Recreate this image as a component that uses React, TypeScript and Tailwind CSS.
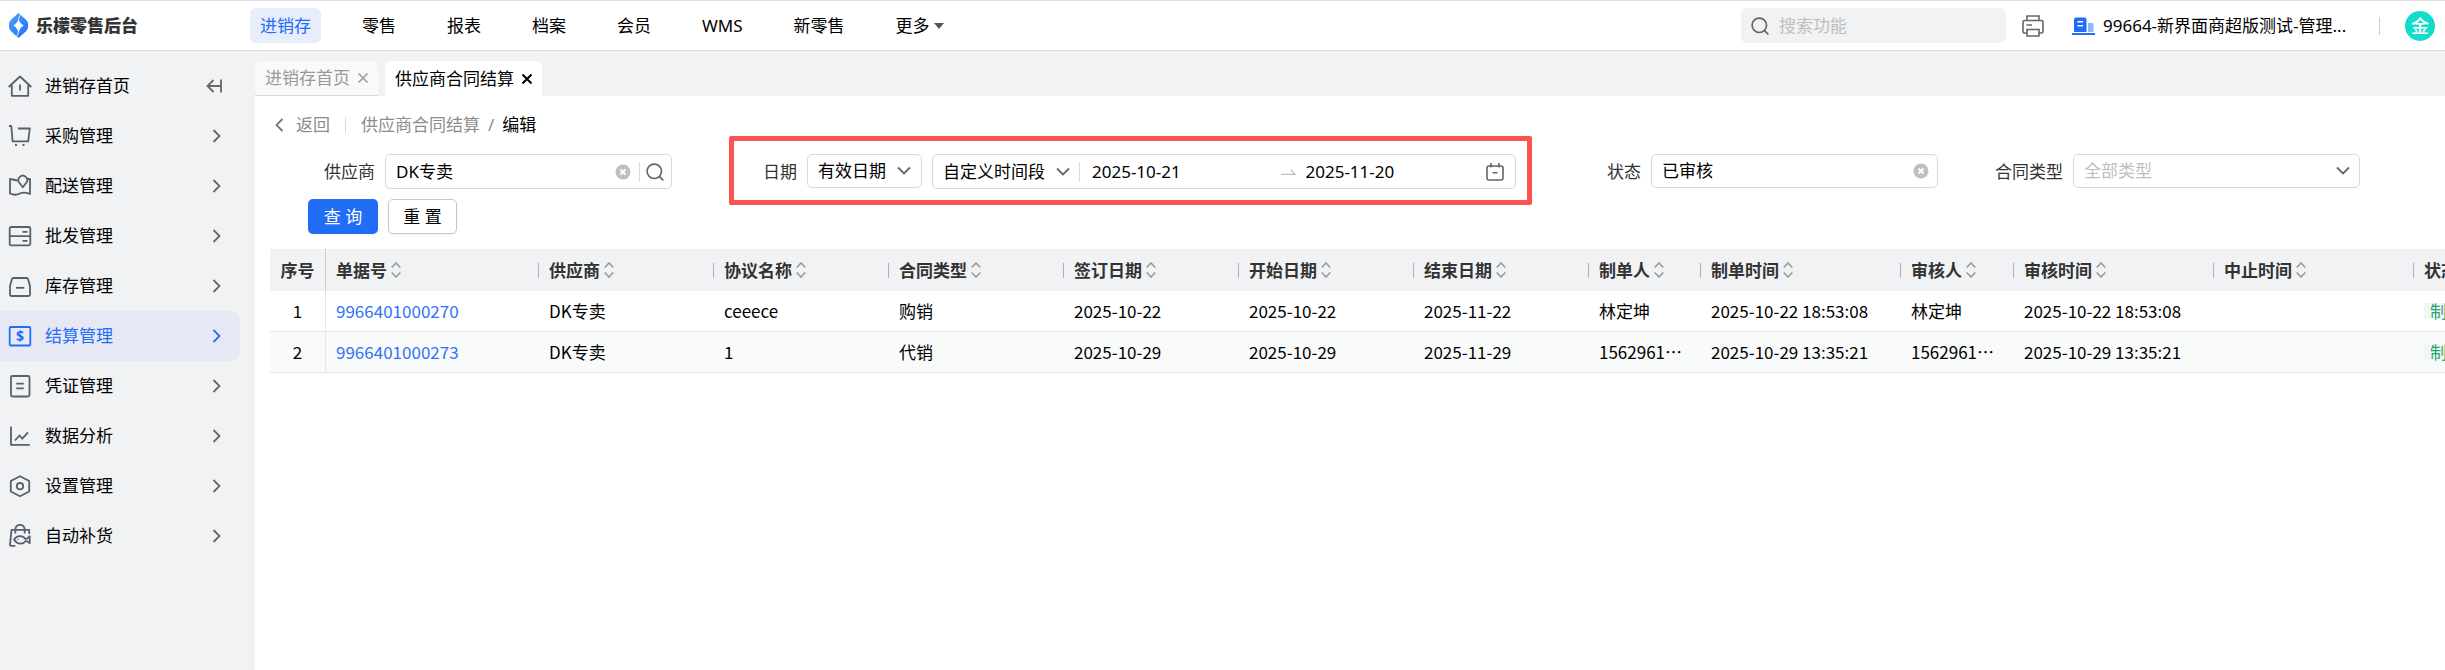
import { useState, type ReactNode } from 'react'
import clsx from 'clsx'

const navItems = ['进销存', '零售', '报表', '档案', '会员', 'WMS', '新零售']

const menuItems: { label: string; icon: ReactNode }[] = [
  {
    label: '进销存首页',
    icon: (
      <>
        <path d="M.7 13 12 2.500 23.300 13" />
        <path d="M3.800 11v10.800h16.400V11M12 10.500v6" />
      </>
    ),
  },
  {
    label: '采购管理',
    icon: (
      <>
        <path d="M1 2h2.300l1.300 15.300h15.600L21.800 4.500H10" />
        <path d="M7 21h2M14.500 21h2" />
      </>
    ),
  },
  {
    label: '配送管理',
    icon: (
      <>
        <path d="M9.500 6.500 2 5v14.500c4 2 7 1.500 10 0 3.500-1.700 6-1 10 .5V5h-2.500" />
        <path d="M14.800 13.300 11.300 8.800a4.400 4.400 0 1 1 7 0z" />
      </>
    ),
  },
  {
    label: '批发管理',
    icon: (
      <>
        <rect x="1.700" y="3" width="20.600" height="18.300" rx="1.500" />
        <path d="M1.700 12.200h20.600M14.500 7.800h5M14.500 16.800h5" />
      </>
    ),
  },
  {
    label: '库存管理',
    icon: (
      <>
        <path d="M5.500 4h13a1.500 1.500 0 0 1 1.500 1l2 7v8.500a1.500 1.500 0 0 1-1.500 1.500h-17A1.500 1.500 0 0 1 2 20.500V12l2-7a1.500 1.500 0 0 1 1.500-1z" />
        <path d="M8 13.800h8.300" />
      </>
    ),
  },
  {
    label: '结算管理',
    icon: (
      <>
        <rect x="1.700" y="3" width="20.600" height="18.500" rx="1" />
        <text x="12" y="17" fontSize="14" fontWeight="700" textAnchor="middle" fill="currentColor" stroke="none">
          $
        </text>
      </>
    ),
  },
  {
    label: '凭证管理',
    icon: (
      <>
        <rect x="3" y="2" width="18.500" height="20.500" rx="1.500" />
        <path d="M8.300 9.700h7.500M8.300 14.300h7.500" />
      </>
    ),
  },
  {
    label: '数据分析',
    icon: (
      <>
        <path d="M3 2.500v18.300h18.800" />
        <path d="m7 16.500 4.500-5 2.800 3.200 5.700-6.400" />
      </>
    ),
  },
  {
    label: '设置管理',
    icon: (
      <>
        <path d="M12 2.200 21.200 7v10.500L12 22.200 2.800 17.500V7z" />
        <circle cx="12" cy="12.200" r="3.200" />
      </>
    ),
  },
  {
    label: '自动补货',
    icon: (
      <>
        <path d="M7.300 9.500V5.500a4.700 4.700 0 0 1 9.400 0v4" />
        <path d="M21.200 10V5.800H3.500L2 20.700a1 1 0 0 0 1 1.100h4.300" />
        <path d="M6 15.500c3-4.500 9-4.500 11.500-.5 1.300.5 2.500-1 4.200-2.800v7c-1.700-1.500-2.900-2.500-4.200-2-2.500 3.500-8.500 3.500-11.500-1.700z" />
        <path d="M10 15v.8" />
      </>
    ),
  },
]

const columns = [
  { title: '单据号', width: 'w-[213px]' },
  { title: '供应商', width: 'w-[175px]' },
  { title: '协议名称', width: 'w-[175px]' },
  { title: '合同类型', width: 'w-[175px]' },
  { title: '签订日期', width: 'w-[175px]' },
  { title: '开始日期', width: 'w-[175px]' },
  { title: '结束日期', width: 'w-[175px]' },
  { title: '制单人', width: 'w-[112px]' },
  { title: '制单时间', width: 'w-[200px]' },
  { title: '审核人', width: 'w-[113px]' },
  { title: '审核时间', width: 'w-[200px]' },
  { title: '中止时间', width: 'w-[200px]' },
  { title: '状态', width: 'w-[175px]' },
]

const rows = [
  ['9966401000270', 'DK专卖', 'ceeece', '购销', '2025-10-22', '2025-10-22', '2025-11-22', '林定坤', '2025-10-22 18:53:08', '林定坤', '2025-10-22 18:53:08', '', '制单'],
  ['9966401000273', 'DK专卖', '1', '代销', '2025-10-29', '2025-10-29', '2025-11-29', '1562961⋯', '2025-10-29 13:35:21', '1562961⋯', '2025-10-29 13:35:21', '', '制单'],
]

type IconProps = { className?: string }

function ChevronRight({ className }: IconProps) {
  return (
    <svg viewBox="0 0 10 14" className={clsx('w-2.5 h-3.5 shrink-0', className)} fill="none" stroke="currentColor" strokeWidth="1.800">
      <path d="m1.500 1 6 6-6 6" />
    </svg>
  )
}

function ChevronDown({ className }: IconProps) {
  return (
    <svg viewBox="0 0 14 10" className={clsx('w-3.5 h-2.5 shrink-0 text-[#666]', className)} fill="none" stroke="currentColor" strokeWidth="1.800">
      <path d="m1 1.500 6 6 6-6" />
    </svg>
  )
}

function SearchIcon({ className }: IconProps) {
  return (
    <svg viewBox="0 0 18 18" className={clsx('size-[18px] shrink-0 text-[#666]', className)} fill="none" stroke="currentColor" strokeWidth="1.700">
      <circle cx="8.300" cy="8.300" r="7.200" />
      <path d="m13.300 13.300 4 4" />
    </svg>
  )
}

function ClearIcon() {
  return (
    <svg viewBox="0 0 16 16" className="size-4" fill="none">
      <circle cx="8" cy="8" r="7.500" fill="#bfbfbf" />
      <path d="m5.500 5.500 5 5m0-5-5 5" stroke="#fff" strokeWidth="1.900" />
    </svg>
  )
}

function CloseIcon({ className }: IconProps) {
  return (
    <svg viewBox="0 0 10 10" className={clsx('size-2.5', className)} fill="none" stroke="currentColor">
      <path d="m.5.5 9 9m0-9-9 9" />
    </svg>
  )
}

function SortIcon() {
  return (
    <svg viewBox="0 0 10 16" className="w-2.5 h-4 text-[#999]" fill="none" stroke="currentColor" strokeWidth="1.600">
      <path d="m.7 5.500 4.300-4.500 4.300 4.500M.7 10.500 5 15l4.300-4.500" />
    </svg>
  )
}

function Header() {
  return (
    <header className="flex h-[51px] items-center border-t border-b border-t-[#e0e0e0] border-b-[#d6d6d6] bg-white pl-[9px] pr-2.5">
      <div className="flex w-[241px] shrink-0 items-center gap-2">
        <svg viewBox="0 0 19 25" className="w-[19px] h-[25px]">
          <defs>
            <linearGradient id="logo" x1="0" y1="0" x2="1" y2="1">
              <stop offset="0" stopColor="#4aa6ff" />
              <stop offset="1" stopColor="#1f6cf9" />
            </linearGradient>
          </defs>
          <path
            fill="url(#logo)"
            fillRule="evenodd"
            d="M9.500 0 17 6.800q2 1.900 2 4.200v3q0 2.300-2 4.200L9.500 25 2 18.200q-2-1.900-2-4.200v-3q0-2.300 2-4.200zM9.500 5.500Q8.500 10.500 4.300 12.500 8.500 14.500 9.500 20q1-5.500 5.200-7.500Q10.500 10.500 9.500 5.500z"
          />
          <path stroke="#fff" strokeWidth=".8" d="m9.500 6 1.800-4.500M9.500 19l-1.800 4.500" />
        </svg>
        <span className="font-black text-[#333]">乐檬零售后台</span>
      </div>
      <nav className="flex items-center gap-[31px]">
        {navItems.map((item, i) => (
          <a
            key={item}
            href="#"
            className={clsx('flex h-[35px] items-center rounded-md px-2.5', i === 0 && 'bg-[#e8edfb] text-[#226df5]')}
          >
            {item}
          </a>
        ))}
        <button type="button" className="flex h-[35px] items-center gap-1 px-2.5">
          更多
          <svg viewBox="0 0 10 6" className="w-2.5 h-1.5" fill="#555">
            <path d="M0 0h10L5 6z" />
          </svg>
        </button>
      </nav>
      <div className="ml-auto flex items-center">
        <div className="flex h-[35px] w-[265px] items-center gap-2.5 rounded-md bg-[#f0f2f4] px-2.5">
          <SearchIcon />
          <input
            type="text"
            aria-label="搜索功能"
            placeholder="搜索功能"
            className="min-w-0 flex-1 bg-transparent outline-none placeholder:text-[#bfbfbf]"
          />
        </div>
        <button type="button" aria-label="打印" className="ml-4">
          <svg viewBox="0 0 22 22" className="size-[22px] text-[#666]" fill="none" stroke="currentColor" strokeWidth="1.600">
            <path d="M5 5.500V1h12v4.500M5 18H2.500A1.500 1.500 0 0 1 1 16.500V7a1.500 1.500 0 0 1 1.500-1.500h17A1.500 1.500 0 0 1 21 7v9.500a1.500 1.500 0 0 1-1.500 1.500H17" />
            <path d="M5 14.500h12V21H5zM4.500 10h5.500" />
          </svg>
        </button>
        <button type="button" className="ml-7 flex items-center gap-2">
          <svg viewBox="0 0 23 18" className="w-[23px] h-[18px]">
            <path fill="#226df5" d="M2 15V2.500A2 2 0 0 1 4 .5h8.500a2 2 0 0 1 2 2V15z" />
            <path fill="#8eb5fb" d="M16 6h4.500a1 1 0 0 1 1 1v8H16z" />
            <path fill="#226df5" d="M0 16h23v2H0z" />
            <path stroke="#fff" strokeWidth="1.600" d="M5.500 4.800H11M5.500 8.800H11" />
          </svg>
          <span className="w-[252px] truncate text-left">99664-新界面商超版测试-管理...</span>
        </button>
        <span className="ml-6 h-[18px] w-px bg-[#ccc]" />
        <span className="ml-[25px] flex size-[30px] items-center justify-center rounded-full bg-[#12dccb] text-[18px] font-medium text-white">金</span>
      </div>
    </header>
  )
}

function Sidebar() {
  return (
    <aside className="w-[255px] shrink-0 bg-[#f1f2f4] pt-2.5">
      <ul>
        {menuItems.map((item, i) => {
          const active = item.label === '结算管理'
          return (
            <li key={item.label}>
              <a
                href="#"
                className={clsx('mr-[15px] flex h-[50px] items-center rounded-r-[10px] pl-2 pr-[18px]', active && 'bg-[#e6e9f4] text-[#226df5]')}
              >
                <svg
                  viewBox="0 0 24 24"
                  className={clsx('size-6', active ? 'text-[#226df5]' : 'text-[#5a5f6e]')}
                  fill="none"
                  stroke="currentColor"
                  strokeWidth="1.800"
                  strokeLinejoin="round"
                >
                  {item.icon}
                </svg>
                <span className="ml-[13px] flex-1">{item.label}</span>
                {i === 0 ? (
                  <svg viewBox="0 0 16 14" className="w-4 h-3.5 text-[#666]" fill="none" stroke="currentColor" strokeWidth="1.800">
                    <path d="M15 .5v13M15 7H1.500M7.500 1l-6 6 6 6" />
                  </svg>
                ) : (
                  <ChevronRight className={active ? 'text-[#226df5]' : 'text-[#666]'} />
                )}
              </a>
            </li>
          )
        })}
      </ul>
    </aside>
  )
}

function Field({ label, htmlFor, wide, children }: { label: string; htmlFor: string; wide?: boolean; children: ReactNode }) {
  return (
    <div className={clsx('relative flex gap-2.5 pr-5', wide && 'col-span-2')}>
      <label htmlFor={htmlFor} className="flex h-[35px] w-[105px] shrink-0 items-center justify-end text-[#333]">
        {label}
      </label>
      {children}
    </div>
  )
}

function Filters() {
  const [supplier, setSupplier] = useState('DK专卖')
  const [start, setStart] = useState('2025-10-21')
  const [end, setEnd] = useState('2025-11-20')
  const [status, setStatus] = useState('已审核')

  return (
    <form onSubmit={(e) => e.preventDefault()}>
      <div className="grid grid-cols-5 pr-[65px]">
        <Field label="供应商" htmlFor="supplier">
          <div className="flex h-[35px] min-w-0 flex-1 items-center rounded-[5px] border border-[#d9d9d9] pl-2.5 pr-[7px]">
            <input id="supplier" value={supplier} onChange={(e) => setSupplier(e.target.value)} className="min-w-0 flex-1 outline-none" />
            <button type="button" aria-label="清除" onClick={() => setSupplier('')}>
              <ClearIcon />
            </button>
            <span className="ml-2 mr-1.5 h-5 w-px bg-[#d9d9d9]" />
            <button type="button" aria-label="选择供应商">
              <SearchIcon />
            </button>
          </div>
        </Field>

        <Field label="日期" htmlFor="date-type" wide>
          <div className="relative h-[34px] w-[115px] shrink-0">
            <select id="date-type" className="size-full appearance-none rounded-[5px] border border-[#d9d9d9] bg-white pl-2.5 outline-none">
              <option>有效日期</option>
            </select>
            <ChevronDown className="pointer-events-none absolute right-[11px] top-3" />
          </div>
          <div className="flex h-[35px] min-w-0 flex-1 items-center rounded-[5px] border border-[#d9d9d9] pl-2.5 pr-[11px]">
            <div className="relative flex w-[127px] shrink-0 items-center">
              <select aria-label="时间段" className="w-full appearance-none bg-white outline-none">
                <option>自定义时间段</option>
              </select>
              <ChevronDown className="pointer-events-none absolute right-0" />
            </div>
            <span className="ml-[9px] h-5 w-px bg-[#d9d9d9]" />
            <input aria-label="开始日期" value={start} onChange={(e) => setStart(e.target.value)} className="ml-3 min-w-0 flex-1 outline-none" />
            <svg viewBox="0 0 15 6" className="mr-2.5 ml-2 h-1.5 w-[15px] shrink-0" fill="none" stroke="#bfbfbf" strokeWidth="1.300">
              <path d="M0 5.300h14L9.500.7" />
            </svg>
            <input aria-label="结束日期" value={end} onChange={(e) => setEnd(e.target.value)} className="min-w-0 flex-1 outline-none" />
            <svg viewBox="0 0 18 18" className="size-[18px] shrink-0 text-[#666]" fill="none" stroke="currentColor" strokeWidth="1.600">
              <rect x="1" y="3" width="16" height="14" rx="2" />
              <path d="M5 0v4.500M13 0v4.500M6.500 9.700h5" />
            </svg>
          </div>
          <div className="pointer-events-none absolute -bottom-4 -top-[18px] left-[37px] right-1 rounded-xs border-[5px] border-[#fb5252]" />
        </Field>

        <Field label="状态" htmlFor="status">
          <div className="flex h-[34px] min-w-0 flex-1 items-center rounded-[5px] border border-[#d9d9d9] pl-2.5 pr-2">
            <select id="status" value={status} onChange={(e) => setStatus(e.target.value)} className="min-w-0 flex-1 appearance-none bg-white outline-none">
              <option value="" />
              <option>已审核</option>
            </select>
            <button type="button" aria-label="清除" onClick={() => setStatus('')}>
              <ClearIcon />
            </button>
          </div>
        </Field>

        <Field label="合同类型" htmlFor="contract-type">
          <div className="relative h-[34px] min-w-0 flex-1">
            <select id="contract-type" className="size-full appearance-none rounded-[5px] border border-[#d9d9d9] bg-white pl-2.5 text-[#bfbfbf] outline-none">
              <option>全部类型</option>
            </select>
            <ChevronDown className="pointer-events-none absolute right-2.5 top-3" />
          </div>
        </Field>
      </div>

      <div className="mt-2.5 flex gap-2.5 pl-[38px]">
        <button type="submit" className="h-[35px] w-[70px] rounded-[5px] bg-[#226df5] text-white shadow-xs">
          查 询
        </button>
        <button type="reset" className="h-[35px] w-[69px] rounded-[5px] border border-[#c8c8c8] bg-white shadow-xs">
          重 置
        </button>
      </div>
    </form>
  )
}

function Cell({ value, index }: { value: string; index: number }) {
  if (index === 0) {
    return <a href="#" className="text-[#2f74f6]">{value}</a>
  }
  if (index === rows[0].length - 1) {
    return <span className="inline-block bg-[#f0f8f5] px-1.5 leading-4 text-[#2ba471]">{value}</span>
  }
  return <>{value}</>
}

function ContractTable() {
  return (
    <div className="mt-[15px] overflow-hidden">
      <table className="w-[2319px] table-fixed border-separate border-spacing-0 text-left font-['Noto_Sans_CJK_SC',sans-serif]">
        <thead>
          <tr className="h-[42px] bg-[#f1f2f4] text-[#333]">
            <th className="w-14 border-r border-[#c9cbcf] text-center">序号</th>
            {columns.map((col, i) => (
              <th key={col.title} className={clsx('p-0 font-bold', col.width)}>
                <div className="flex items-center">
                  <span className="flex flex-1 items-center gap-1 pl-2.5">
                    {col.title}
                    <SortIcon />
                  </span>
                  {i < columns.length - 1 && <span className="h-[15px] w-px bg-[#a9b0c0]" />}
                </div>
              </th>
            ))}
          </tr>
        </thead>
        <tbody>
          {rows.map((row, r) => (
            <tr key={row[0]} className={clsx('h-[41px]', r % 2 === 1 && 'bg-[#f9fbfa]')}>
              <td className="border-r border-b border-[#e6e6e6] text-center">{r + 1}</td>
              {row.map((value, i) => (
                <td key={i} className="truncate border-b border-[#e6e6e6] py-0 pl-2.5">
                  <Cell value={value} index={i} />
                </td>
              ))}
            </tr>
          ))}
        </tbody>
      </table>
    </div>
  )
}

export default function App() {
  return (
    <div className="flex min-h-screen flex-col overflow-hidden bg-white font-['Noto_Sans','Noto_Sans_CJK_SC',sans-serif] text-[17px] leading-6 text-black">
      <Header />
      <div className="flex flex-1">
        <Sidebar />
        <main className="min-w-0 flex-1">
          <div className="flex h-[45px] items-end gap-[7px] bg-[#f1f2f4]">
            <div className="flex h-[35px] items-center gap-2 rounded-t-md border-b border-[#d9d9d9] bg-[#f9f9f9] px-2.5 text-[#999]">
              <a href="#">进销存首页</a>
              <button type="button" aria-label="关闭">
                <CloseIcon className="stroke-[1.5]" />
              </button>
            </div>
            <div className="flex h-[35px] items-center gap-2 rounded-t-md bg-white px-2.5">
              <a href="#">供应商合同结算</a>
              <button type="button" aria-label="关闭">
                <CloseIcon className="stroke-2" />
              </button>
            </div>
          </div>

          <div className="pl-[15px]">
            <div className="flex h-[58px] items-center pl-1 text-[#8c8c8c]">
              <a href="#" className="flex items-center gap-3">
                <ChevronRight className="rotate-180 text-[#777]" />
                返回
              </a>
              <span className="mx-[15px] h-4 w-px bg-[#d9d9d9]" />
              <a href="#">供应商合同结算</a>
              <span className="mx-2">/</span>
              <span className="text-black">编辑</span>
            </div>
            <Filters />
            <ContractTable />
          </div>
        </main>
      </div>
    </div>
  )
}
